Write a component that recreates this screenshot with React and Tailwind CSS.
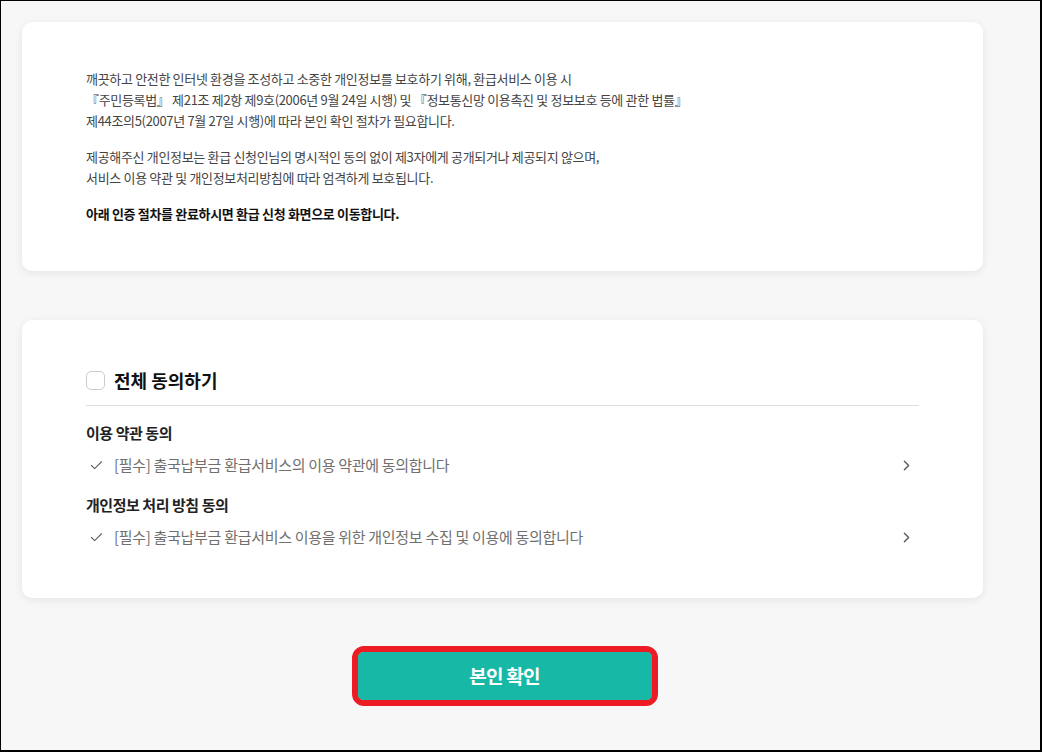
import React from "react";
import { Check, ChevronRight } from "lucide-react";

const font = { fontFamily: '"Noto Sans CJK KR", "Noto Sans", sans-serif' };

function AgreeItem({ title, text }) {
    return (
        <div>
            <h4 className="text-[15px] font-bold text-[#222] tracking-[-0.03em] leading-[20px]">{title}</h4>
            <div className="flex items-center mt-[12px] h-[20px]">
                <Check size={15} strokeWidth={1.8} className="text-[#666] ml-[3px] mr-[10px]" />
                <span className="flex-1 text-[15px] text-[#6f6f6f] tracking-[-0.02em]">{text}</span>
                <ChevronRight size={17} strokeWidth={1.8} className="text-[#555] mr-[4px]" />
            </div>
        </div>
    );
}

export default function App() {
    return (
        <div className="w-[1042px] h-[752px] bg-[#f7f7f7] border-t border-l border-r-2 border-b-2 border-black overflow-hidden" style={font}>
            <div className="pt-[21px] pl-[21px] w-[982px]">

                {/* 안내 문구 */}
                <div className="bg-white rounded-[10px] shadow-[0_2px_8px_rgba(0,0,0,0.08)] h-[249px] px-[64px] pt-[46px]">
                    <div className="text-[13px] text-[#444] leading-[21px] tracking-[-0.025em]">
                        <p>
                            깨끗하고 안전한 인터넷 환경을 조성하고 소중한 개인정보를 보호하기 위해, 환급서비스 이용 시<br />
                            『주민등록법』 제21조 제2항 제9호(2006년 9월 24일 시행) 및 『정보통신망 이용촉진 및 정보보호 등에 관한 법률』<br />
                            제44조의5(2007년 7월 27일 시행)에 따라 본인 확인 절차가 필요합니다.
                        </p>
                        <p className="mt-[15px]">
                            제공해주신 개인정보는 환급 신청인님의 명시적인 동의 없이 제3자에게 공개되거나 제공되지 않으며,<br />
                            서비스 이용 약관 및 개인정보처리방침에 따라 엄격하게 보호됩니다.
                        </p>
                        <p className="mt-[15px] font-bold text-[#111]">아래 인증 절차를 완료하시면 환급 신청 화면으로 이동합니다.</p>
                    </div>
                </div>

                {/* 약관 동의 */}
                <div className="bg-white rounded-[10px] shadow-[0_2px_8px_rgba(0,0,0,0.08)] h-[278px] mt-[49px] px-[64px] pt-[50px]">
                    <label className="flex items-center h-[20px]">
                        <span className="w-[19px] h-[19px] rounded-[5px] border border-[#ccc] bg-white mr-[9px]"></span>
                        <span className="text-[18px] font-bold text-[#111]">전체 동의하기</span>
                    </label>
                    <div className="h-px bg-[#ddd] mt-[15px]"></div>
                    <div className="mt-[17px] space-y-[20px]">
                        <AgreeItem title="이용 약관 동의" text="[필수] 출국납부금 환급서비스의 이용 약관에 동의합니다" />
                        <AgreeItem title="개인정보 처리 방침 동의" text="[필수] 출국납부금 환급서비스 이용을 위한 개인정보 수집 및 이용에 동의합니다" />
                    </div>
                </div>

                {/* 버튼 */}
                <div className="flex justify-center mt-[48px]">
                    <div className="ml-[4px] border-[6px] border-[#ed1c24] rounded-[12px]">
                        <button className="w-[294px] h-[48px] bg-[#17b9a6] rounded-[5px] text-white text-[19px] font-bold tracking-[-0.04em]">
                            본인 확인
                        </button>
                    </div>
                </div>
            </div>
        </div>
    );
}
